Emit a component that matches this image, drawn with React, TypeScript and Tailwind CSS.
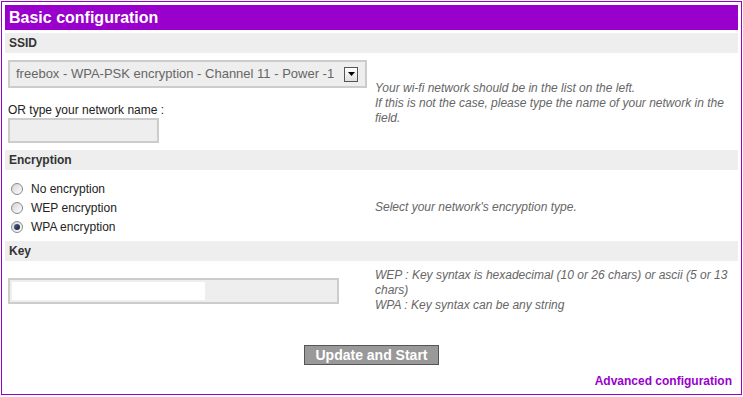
import React from "react";

function Radio({ checked }: { checked?: boolean }) {
  return (
    <span className="w-[12px] h-[12px] rounded-full border border-[#8a8a8a] bg-gradient-to-br from-[#d4d4d4] to-[#ffffff] flex items-center justify-center shrink-0">
      {checked && <span className="w-[6px] h-[6px] rounded-full bg-gradient-to-br from-[#4a6a9a] to-[#1a1a2a]" />}
    </span>
  );
}

function Bar({ children }: { children: React.ReactNode }) {
  return (
    <div className="h-[20px] bg-[#eeeeee] pl-[4px] text-[12px] font-bold text-[#333333] flex items-center">
      {children}
    </div>
  );
}

export default function App() {
  return (
    <div className="m-px w-[741px] h-[394px] border border-[#9900cc] p-[3px] flex flex-col bg-white font-['Liberation_Sans',Arial,sans-serif]">
      <div className="h-[25px] bg-[#9900cc] text-white font-bold text-[16px] pl-[4px] flex items-center">
        Basic configuration
      </div>
      <div className="mt-[3px]">
        <Bar>SSID</Bar>
      </div>
      <div className="flex items-center">
        <div className="w-[370px] pl-[3px] pt-[7px] pb-[7px] flex flex-col">
          <div className="w-[359px] h-[28px] border-2 border-[#cccccc] bg-[#eeeeee] flex items-center pl-[6px] text-[13px] text-[#666666]">
            <span>freebox - WPA-PSK encryption - Channel 11 - Power -1</span>
            <span className="ml-auto mr-[7px] w-[14px] h-[15px] border border-[#555555] bg-gradient-to-b from-[#ffffff] to-[#e0e0e0] flex items-center justify-center">
              <svg width="7" height="4" viewBox="0 0 7 4">
                <path d="M0 0 H7 L3.5 4 Z" fill="#000" />
              </svg>
            </span>
          </div>
          <div className="mt-[15px] text-[12px] leading-[15px] text-[#222222]">OR type your network name :</div>
          <div className="w-[151px] h-[25px] border-2 border-[#cccccc] bg-[#eeeeee]" />
        </div>
        <div className="mt-[4px] text-[12px] italic leading-[15px] text-[#666666]">
          <div>Your wi-fi network should be in the list on the left.</div>
          <div>If this is not the case, please type the name of your network in the</div>
          <div>field.</div>
        </div>
      </div>
      <Bar>Encryption</Bar>
      <div className="flex items-center pt-[9px] pb-[5px]">
        <div className="w-[370px] pl-[6px] flex flex-col text-[12px] text-[#222222]">
          <div className="h-[19px] flex items-center gap-[8px]">
            <Radio />
            <span>No encryption</span>
          </div>
          <div className="h-[19px] flex items-center gap-[8px]">
            <Radio />
            <span>WEP encryption</span>
          </div>
          <div className="h-[19px] flex items-center gap-[8px]">
            <Radio checked />
            <span>WPA encryption</span>
          </div>
        </div>
        <div className="text-[12px] italic leading-[15px] text-[#666666]">
          Select your network's encryption type.
        </div>
      </div>
      <Bar>Key</Bar>
      <div className="flex items-center pt-[7px]">
        <div className="w-[370px] pl-[3px]">
          <div className="w-[331px] h-[26px] border-2 border-[#cccccc] bg-[#eeeeee] p-[2px]">
            <div className="w-[193px] h-[18px] bg-white" />
          </div>
        </div>
        <div className="text-[12px] italic leading-[15px] text-[#666666]">
          <div>WEP : Key syntax is hexadecimal (10 or 26 chars) or ascii (5 or 13</div>
          <div>chars)</div>
          <div>WPA : Key syntax can be any string</div>
        </div>
      </div>
      <div className="mt-[32px] flex justify-center">
        <button className="w-[135px] h-[20px] bg-[#999999] border border-[#555555] text-white font-bold text-[14px] leading-[18px] flex items-center justify-center">
          Update and Start
        </button>
      </div>
      <div className="mt-[9px] pr-[6px] flex justify-end">
        <span className="text-[12px] font-bold leading-[15px] text-[#9900cc]">Advanced configuration</span>
      </div>
    </div>
  );
}
